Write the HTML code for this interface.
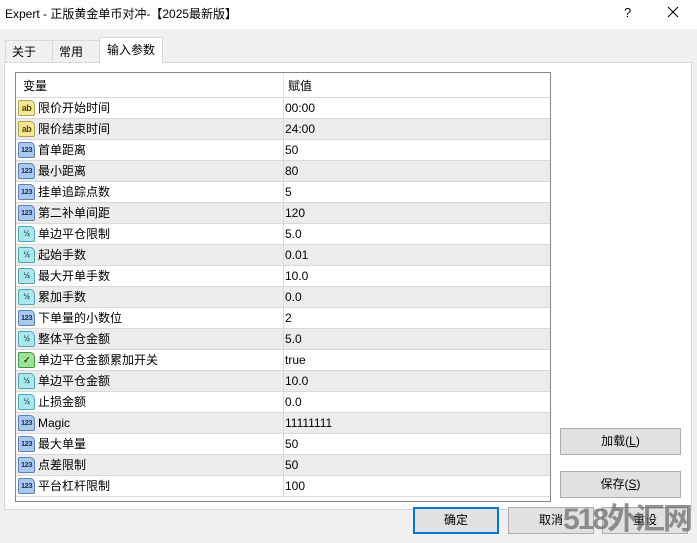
<!DOCTYPE html>
<html><head><meta charset="utf-8">
<style>
*{box-sizing:border-box;margin:0;padding:0}
html{width:697px;height:543px;overflow:hidden}
body{width:697px;height:543px;background:#f0f0f0;font-family:"Liberation Sans","Noto Sans CJK SC",sans-serif;font-size:12px;line-height:14px;color:#000;position:relative;overflow:hidden}
.title{position:absolute;left:0;top:0;width:697px;height:29px;background:#fff}
.title .t{position:absolute;left:5px;top:7px;font-size:12px}
.title .q{position:absolute;left:624px;top:6px;font-size:13px}
.title .x{position:absolute;left:665px;top:4px;width:16px;height:16px}
.tab{position:absolute;top:40px;height:22px;border:1px solid #d9d9d9;border-bottom:none;background:#f0f0f0;padding:4px 0 0 6px}
.tab.act{top:37px;height:26px;background:#fff;z-index:2;padding:5px 0 0 7px}
.panel{position:absolute;left:4px;top:62px;width:688px;height:448px;background:#fff;border:1px solid #d9d9d9}
.tbl{position:absolute;left:15px;top:72px;width:536px;height:430px;border:1px solid #828790;background:#fff;overflow:hidden}
.row{position:absolute;left:0;width:534px;height:21px;border-bottom:1px solid #d9d9d9}
.row.g{background:#ececec}
.row .n{position:absolute;left:22px;top:0;line-height:20px}
.row .v{position:absolute;left:269px;top:0;line-height:20px}
.row .d{position:absolute;left:267px;top:0;height:21px;border-left:1px solid #d9d9d9}
.hdr{position:absolute;left:0;top:0;width:534px;height:25px;border-bottom:1px solid #d9d9d9;background:#fff}
.hdr .n{position:absolute;left:7px;top:0;line-height:26px}
.hdr .v{position:absolute;left:272px;top:0;line-height:26px}
.hdr .d{position:absolute;left:267px;top:0;height:25px;border-left:1px solid #e5e5e5}
.ic{position:absolute;left:2px;top:2px;width:17px;height:16px;border:1px solid;border-radius:2px 5px 2px 2px;font-size:9px;font-weight:bold;text-align:center;line-height:14px;letter-spacing:-0.5px;font-family:"Liberation Sans",sans-serif}
.ab{background:#f3e79a;border-color:#b5a04a;color:#5a4a00}
.n1{background:#a9c9ee;border-color:#5a82b8;color:#12355e;font-size:7.5px}
.hf{background:#aee6ee;border-color:#4aa8b8;color:#1a5560;font-size:8px}
.bl{background:#9fe09a;border-color:#3a9a3a;color:#104a10}
.btn{position:absolute;height:27px;border:1px solid #adadad;background:#e1e1e1;text-align:center;line-height:25px;font-size:12px}
.wm{position:absolute;left:563px;top:503px;font-size:30px;line-height:34px;font-weight:bold;color:rgba(110,110,110,0.75);white-space:nowrap;letter-spacing:-2px}
</style></head><body>
<div class="title"><span class="t">Expert - 正版黄金单币对冲-【2025最新版】</span><span class="q">?</span>
<svg class="x" viewBox="0 0 16 16"><path d="M3 3L13 13M13 3L3 13" stroke="#000" stroke-width="1.1" fill="none"/></svg></div>
<div class="panel"></div>
<div class="tab" style="left:5px;width:48px">关于</div>
<div class="tab" style="left:52px;width:48px">常用</div>
<div class="tab act" style="left:99px;width:64px">输入参数</div>
<div class="tbl">
<div class="hdr"><span class="n">变量</span><span class="d"></span><span class="v">赋值</span></div>
<div class="row" style="top:25px"><span class="ic ab">ab</span><span class="n">限价开始时间</span><span class="d"></span><span class="v">00:00</span></div>
<div class="row g" style="top:46px"><span class="ic ab">ab</span><span class="n">限价结束时间</span><span class="d"></span><span class="v">24:00</span></div>
<div class="row" style="top:67px"><span class="ic n1">123</span><span class="n">首单距离</span><span class="d"></span><span class="v">50</span></div>
<div class="row g" style="top:88px"><span class="ic n1">123</span><span class="n">最小距离</span><span class="d"></span><span class="v">80</span></div>
<div class="row" style="top:109px"><span class="ic n1">123</span><span class="n">挂单追踪点数</span><span class="d"></span><span class="v">5</span></div>
<div class="row g" style="top:130px"><span class="ic n1">123</span><span class="n">第二补单间距</span><span class="d"></span><span class="v">120</span></div>
<div class="row" style="top:151px"><span class="ic hf">½</span><span class="n">单边平仓限制</span><span class="d"></span><span class="v">5.0</span></div>
<div class="row g" style="top:172px"><span class="ic hf">½</span><span class="n">起始手数</span><span class="d"></span><span class="v">0.01</span></div>
<div class="row" style="top:193px"><span class="ic hf">½</span><span class="n">最大开单手数</span><span class="d"></span><span class="v">10.0</span></div>
<div class="row g" style="top:214px"><span class="ic hf">½</span><span class="n">累加手数</span><span class="d"></span><span class="v">0.0</span></div>
<div class="row" style="top:235px"><span class="ic n1">123</span><span class="n">下单量的小数位</span><span class="d"></span><span class="v">2</span></div>
<div class="row g" style="top:256px"><span class="ic hf">½</span><span class="n">整体平仓金额</span><span class="d"></span><span class="v">5.0</span></div>
<div class="row" style="top:277px"><span class="ic bl">✓</span><span class="n">单边平仓金额累加开关</span><span class="d"></span><span class="v">true</span></div>
<div class="row g" style="top:298px"><span class="ic hf">½</span><span class="n">单边平仓金额</span><span class="d"></span><span class="v">10.0</span></div>
<div class="row" style="top:319px"><span class="ic hf">½</span><span class="n">止损金额</span><span class="d"></span><span class="v">0.0</span></div>
<div class="row g" style="top:340px"><span class="ic n1">123</span><span class="n">Magic</span><span class="d"></span><span class="v">11111111</span></div>
<div class="row" style="top:361px"><span class="ic n1">123</span><span class="n">最大单量</span><span class="d"></span><span class="v">50</span></div>
<div class="row g" style="top:382px"><span class="ic n1">123</span><span class="n">点差限制</span><span class="d"></span><span class="v">50</span></div>
<div class="row" style="top:403px"><span class="ic n1">123</span><span class="n">平台杠杆限制</span><span class="d"></span><span class="v">100</span></div>
</div>
<div class="btn" style="left:560px;top:428px;width:121px">加载(<u>L</u>)</div>
<div class="btn" style="left:560px;top:471px;width:121px">保存(<u>S</u>)</div>
<div class="btn" style="left:413px;top:507px;width:86px;border:2px solid #0078d7;line-height:23px">确定</div>
<div class="btn" style="left:508px;top:507px;width:86px">取消</div>
<div class="btn" style="left:602px;top:507px;width:86px">重设</div>
<div class="wm">518外汇网</div>
</body></html>
